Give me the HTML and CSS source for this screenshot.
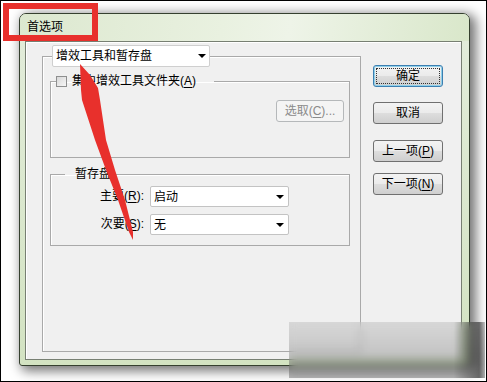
FILE: index.html
```html
<!DOCTYPE html>
<html lang="zh-CN">
<head>
  <meta charset="UTF-8">
  <title>首选项</title>
  <link rel="stylesheet" href="styles.css">
</head>
<body>
<div class="stage">
  <div class="window">
    <div class="titlebar">首选项</div>
    <div class="client">
      <fieldset class="pane">
        <legend class="pane-legend">
          <div class="combo combo-wide"><span>增效工具和暂存盘</span><i class="caret"></i></div>
        </legend>
        <div class="pane-body">
          <fieldset class="group">
            <legend class="check-legend"><span class="checkbox"></span>集中增效工具文件夹(<u>A</u>)</legend>
            <div class="choose-row">
              <div class="btn btn-disabled">选取(<u>C</u>)...</div>
            </div>
          </fieldset>
          <fieldset class="group group-scratch">
            <legend class="text-legend">暂存盘</legend>
            <div class="scratch-grid">
              <label>主要(<u>R</u>):</label>
              <div class="combo"><span>启动</span><i class="caret"></i></div>
              <label>次要(<u>S</u>):</label>
              <div class="combo"><span>无</span><i class="caret"></i></div>
            </div>
          </fieldset>
        </div>
      </fieldset>
      <div class="buttons">
        <div class="btn btn-default"><span class="focus">确定</span></div>
        <div class="btn btn-cancel">取消</div>
        <div class="btn btn-prev">上一项(<u>P</u>)</div>
        <div class="btn btn-next">下一项(<u>N</u>)</div>
      </div>
    </div>
  </div>
</div>

<!-- annotations -->
<div class="red-box"></div>
<svg class="arrow-mark" width="487" height="382" viewBox="0 0 487 382">
  <polygon points="80,64 90,75 98,88 100,100 106,140 115,170 125,200 133,232 133,240 129,232 118,200 106,170 95,140 82,100 81,90" fill="#e8302c"/>
</svg>
<div class="blur-patch"></div>
</body>
</html>
```

FILE: styles.css
```css
body {
  margin: 0;
  width: 487px;
  height: 382px;
  box-sizing: border-box;
  border: 1px solid #000;
  background: #fff;
  position: relative;
  overflow: hidden;
  font-family: "Liberation Sans", "Noto Sans CJK SC", sans-serif;
  font-size: 12px;
  line-height: 16px;
  color: #000;
}
u {
  text-decoration: underline;
  text-underline-offset: 2px;
}
.stage {
  padding: 12px 0 0 18px;
}
.window {
  width: 451px;
  height: 353px;
  box-sizing: border-box;
  border: 1px solid #35402f;
  border-radius: 7px 7px 3px 3px;
  background: linear-gradient(to bottom, #e3eddb, #d3e3c2);
  box-shadow: 4px 3px 12px 2px rgba(0,0,0,0.55);
  display: flex;
  flex-direction: column;
}
.titlebar {
  height: 27px;
  line-height: 27px;
  padding-left: 7px;
  border-radius: 6px 6px 0 0;
  background: linear-gradient(100deg, #dce8cf 0%, #e9f1e0 45%, #eef4e8 60%, #d9e7ca 100%);
}
.client {
  flex: 1;
  margin: 0 7px 5px 5px;
  border: 1px solid #777f72;
  background: #f0f0f0;
  box-shadow: inset 1px 1px 0 #fff;
  display: flex;
  padding: 3px 18px 7px 16px;
}
fieldset {
  margin: 0;
  padding: 0;
  min-width: 0;
}
.pane {
  width: 319px;
  box-sizing: border-box;
  border: 1px solid #a9a9a9;
  box-shadow: inset 1px 1px 0 #fff;
}
.pane-legend {
  margin-left: 9px;
  padding: 0;
}
.pane-body {
  padding: 6px 10px 0 7px;
}
.group {
  border: 1px solid #a9a9a9;
  box-shadow: inset 1px 1px 0 #fff;
}
.check-legend {
  margin-left: 5px;
  padding: 0 18px 0 0;
  display: flex;
  align-items: center;
}
.checkbox {
  width: 9px;
  height: 9px;
  border: 1px solid #8e8f8f;
  background: linear-gradient(135deg, #d8d8d8, #f6f6f6);
  margin-right: 5px;
}
.choose-row {
  display: flex;
  justify-content: flex-end;
  padding: 11px 5px 35px 0;
}
.group-scratch {
  margin-top: 8px;
}
.text-legend {
  margin-left: 14px;
  padding: 0 5px 0 10px;
}
.scratch-grid {
  display: grid;
  grid-template-columns: 93px 139px;
  column-gap: 6px;
  row-gap: 7px;
  padding: 4px 0 10px 0;
}
.scratch-grid label {
  text-align: right;
  line-height: 21px;
}
.combo {
  height: 21px;
  box-sizing: border-box;
  border: 1px solid #c3c3c3;
  border-radius: 2px;
  background: #fff;
  padding: 0 4px 0 3px;
  display: flex;
  align-items: center;
  justify-content: space-between;
}
.combo-wide {
  width: 158px;
  height: 22px;
  border-color: #cfcfcf;
  padding-right: 3px;
}
.caret {
  width: 0;
  height: 0;
  border-left: 4px solid transparent;
  border-right: 4px solid transparent;
  border-top: 4px solid #000;
}
.buttons {
  margin-left: 12px;
  padding-top: 20px;
  display: flex;
  flex-direction: column;
}
.btn {
  width: 70px;
  height: 22px;
  box-sizing: border-box;
  border: 1px solid #707070;
  border-radius: 3px;
  background: linear-gradient(to bottom, #f3f3f3 0%, #ebebeb 48%, #dddddd 52%, #cfcfcf 100%);
  display: flex;
  align-items: center;
  justify-content: center;
}
.btn-default {
  border-color: #3c7fb1;
  box-shadow: inset 0 0 0 1px #8fd0ea;
  align-items: stretch;
  justify-content: stretch;
}
.focus {
  flex: 1;
  margin: 2px;
  border: 1px dotted #333;
  display: flex;
  align-items: center;
  justify-content: center;
}
.btn-cancel { margin-top: 15px; }
.btn-prev { margin-top: 16px; }
.btn-next { margin-top: 11px; }
.btn-disabled {
  width: 68px;
  border-color: #b5b8ba;
  background: #f4f4f4;
  color: #8a8a8a;
}
.red-box {
  position: absolute;
  left: 2px;
  top: 2px;
  width: 95px;
  height: 38px;
  box-sizing: border-box;
  border: 6px solid #e8302c;
}
.arrow-mark {
  position: absolute;
  left: -1px;
  top: -1px;
  pointer-events: none;
}
.blur-patch {
  position: absolute;
  left: 288px;
  top: 321px;
  width: 196px;
  height: 56px;
  backdrop-filter: blur(4px);
  background:
    linear-gradient(to right, rgba(0,0,0,0) 84%, rgba(0,0,0,0.45) 97%, rgba(0,0,0,0.1) 100%),
    linear-gradient(to bottom, rgba(0,0,0,0.1), rgba(0,0,0,0.24));
}
```
